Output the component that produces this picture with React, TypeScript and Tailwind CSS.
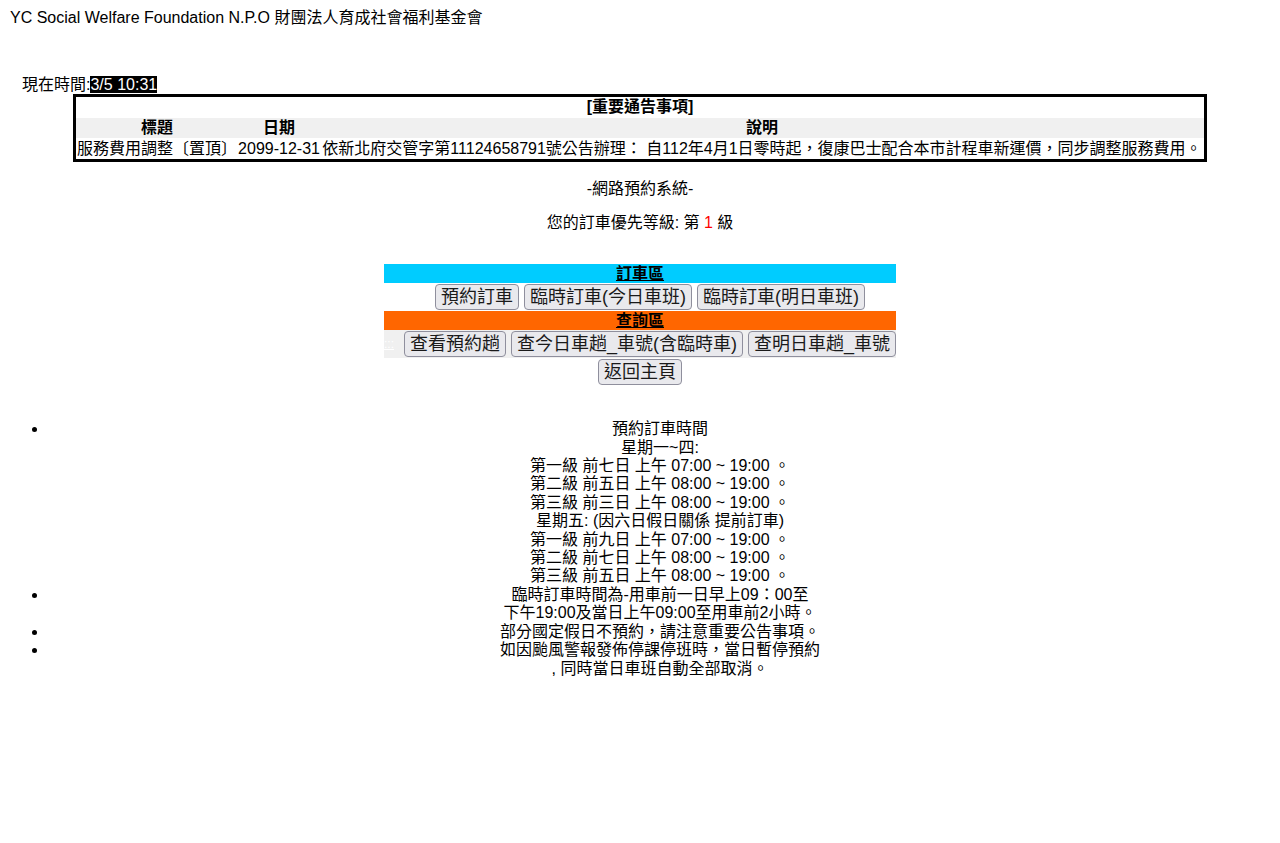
import React from "react";

const btn =
  "h-[26px] px-[5px] text-[18px] leading-[22px] border border-[#8f8f9d] rounded-[4px] bg-[#e9e9ed] text-[#1a1a1a] whitespace-nowrap";

export default function App() {
  return (
    <div className="m-2 font-['Liberation_Sans','Noto_Sans_CJK_TC',sans-serif] text-[16px] leading-[18.4px] text-black bg-white">
      <div className="h-[18px] pl-[2px] pt-[1px]">YC Social Welfare Foundation N.P.O 財團法人育成社會福利基金會</div>

      <div className="mt-[50px] pl-[14px]">
        現在時間:<span className="bg-black text-white">3/5 10:31</span>
      </div>

      <div className="mx-auto w-[1134px] border-[3px] border-black flex flex-col gap-[1px]">
        <div className="h-[20px] flex items-center justify-center font-bold">[重要通告事項]</div>
        <div className="h-[20px] grid grid-cols-[162px_82px_1fr] items-center bg-[#f0f0f0] font-bold">
          <div className="text-center">標題</div>
          <div className="text-center">日期</div>
          <div className="text-center">說明</div>
        </div>
        <div className="h-[20px] grid grid-cols-[162px_82px_1fr] items-center whitespace-nowrap">
          <div className="text-center">服務費用調整〔置頂〕</div>
          <div className="text-center">2099-12-31</div>
          <div className="text-center">
            依新北府交管字第11124658791號公告辦理： 自112年4月1日零時起，復康巴士配合本市計程車新運價，同步調整服務費用。
          </div>
        </div>
      </div>

      <div className="mt-[18px] text-center">-網路預約系統-</div>
      <div className="mt-[15px] text-center">
        您的訂車優先等級: 第 <span className="text-[#ff0000]">1</span> 級
      </div>

      <div className="mt-[32px] mx-auto w-[512px] flex flex-col">
        <div className="h-[19px] bg-[#00ccff] flex items-center justify-center font-bold underline">訂車區</div>
        <div className="h-[28px] flex items-center justify-center gap-[5px] pl-[20px]">
          <button className={btn}>預約訂車</button>
          <button className={btn}>臨時訂車(今日車班)</button>
          <button className={btn}>臨時訂車(明日車班)</button>
        </div>
        <div className="h-[19px] bg-[#ff6600] flex items-center justify-center font-bold underline">查詢區</div>
        <div className="h-[28px] flex items-center gap-[5px] bg-[#f0f0f0]">
          <span className="w-[15px] text-white text-[12px] underline">:::</span>
          <button className={btn}>查看預約趟</button>
          <button className={btn}>查今日車趟_車號(含臨時車)</button>
          <button className={btn}>查明日車趟_車號</button>
        </div>
        <div className="h-[28px] flex items-center justify-center">
          <button className={btn}>返回主頁</button>
        </div>
      </div>

      <ul className="mt-[34px] pl-10 list-disc text-center">
        <li>
          預約訂車時間
          <br />
          星期一~四:
          <br />
          第一級 前七日 上午 07:00 ~ 19:00 。
          <br />
          第二級 前五日 上午 08:00 ~ 19:00 。
          <br />
          第三級 前三日 上午 08:00 ~ 19:00 。
          <br />
          星期五: (因六日假日關係 提前訂車)
          <br />
          第一級 前九日 上午 07:00 ~ 19:00 。
          <br />
          第二級 前七日 上午 08:00 ~ 19:00 。
          <br />
          第三級 前五日 上午 08:00 ~ 19:00 。
        </li>
        <li>
          臨時訂車時間為-用車前一日早上09：00至
          <br />
          下午19:00及當日上午09:00至用車前2小時。
        </li>
        <li>部分國定假日不預約，請注意重要公告事項。</li>
        <li>
          如因颱風警報發佈停課停班時，當日暫停預約
          <br />, 同時當日車班自動全部取消。
        </li>
      </ul>
    </div>
  );
}
